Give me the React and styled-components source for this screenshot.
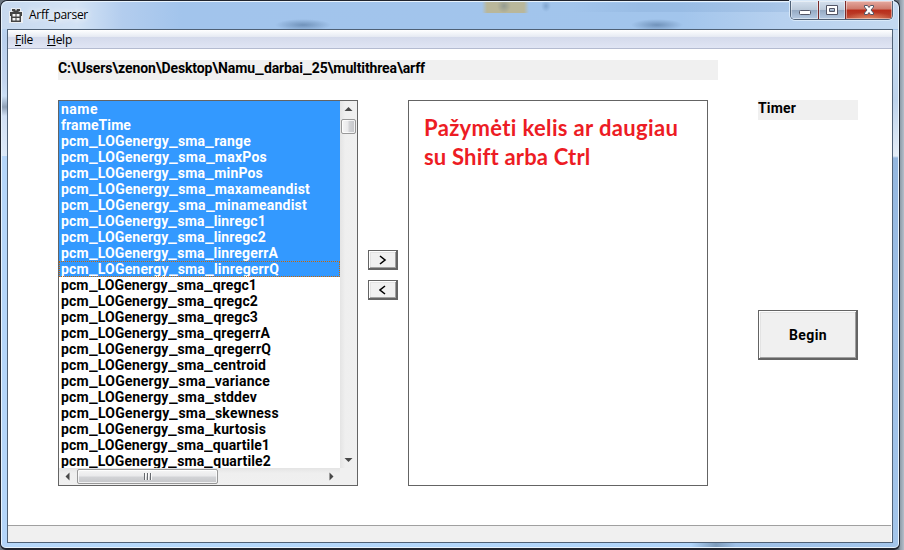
import React from "react";
import styled, { createGlobalStyle, css } from "styled-components";

const Global = createGlobalStyle`
  * { box-sizing: border-box; }
  html, body { margin: 0; padding: 0; overflow: hidden; }
`;

const SYSTEM = 'bold 14px Roboto, "Liberation Sans", sans-serif';
const CAPTION = '12px "Open Sans", "Noto Sans", sans-serif';
const NOTE = 'bold 22px Lato, sans-serif';
const UNDERSCORE = 9;

const ctx = document.createElement("canvas").getContext("2d");
function spacingFor(text, font, width) {
  const wide = font === SYSTEM ? text.split("_").length - 1 : 0;
  const letters = wide ? text.replaceAll("_", "") : text;
  ctx.font = font;
  return (width - wide * UNDERSCORE - ctx.measureText(letters).width) / letters.length;
}

const Line = styled.span`
  display: block;
  white-space: pre;
  font: ${(p) => p.$font};
  letter-spacing: ${(p) => p.$spacing.toFixed(3)}px;
`;

const Underscore = styled.span`
  display: inline-block;
  width: 6.3px;
  margin-right: ${UNDERSCORE - 6.3}px;
  transform: scaleX(1.4);
  transform-origin: 0 0;
  letter-spacing: 0;
`;

function Label({ text, width, font = SYSTEM, children }) {
  const content = font === SYSTEM
    ? text.split(/(_)/).map((s, i) => (s === "_" ? <Underscore key={i}>_</Underscore> : s))
    : text;
  return (
    <Line $font={font} $spacing={spacingFor(text, font, width)}>
      {children || content}
    </Line>
  );
}

const Desktop = styled.div`
  width: 904px;
  height: 550px;
  overflow: hidden;
  background: linear-gradient(90deg, #6b7580 899px, #8e9ba8 900px, #b5bfca 904px);
`;

const Window = styled.div`
  width: 900px;
  height: 550px;
  display: flex;
  flex-direction: column;
  padding: 0 6px 5px 5px;
  border: solid #20242e;
  border-width: 1px 1px 2px 1px;
  border-radius: 7px 7px 6px 6px;
  box-shadow: inset 0 0 0 1px #e8f3fd;
  background:
    linear-gradient(90deg, #b4d5f9 0 8px, transparent 8px) 0 155px / 8px 400px no-repeat,
    linear-gradient(180deg, #c0e0fa 0, #b9d0ed 35px, #c3d5ef 80px, #cbdff5 95px, #8fa0b6 106px, #d1e0f4 115px, #dce9f8 155px) 0 0 / 8px 155px no-repeat,
    linear-gradient(180deg, #c9dcf1 0, #bdd3ec 70px, #e4edf7 126px, #94b7df 128px, #9fc1e8 300px, #a3c5ea 100%) 100% 29px / 8px 521px no-repeat,
    linear-gradient(90deg, #b6d8fa, #b0d5fa 690px, #7e9dbd 715px, #9fc1e8 735px, #a3c6ec) 0 100% / 100% 7px no-repeat,
    #a2c5ec;
`;

const TitleBar = styled.header`
  flex: none;
  height: 28px;
  margin: 0 -5px 0 -4px;
  padding-left: 7px;
  display: flex;
  align-items: flex-start;
  border-radius: 6px 6px 0 0;
  box-shadow: inset 0 1px #e8f3fd;
  background:
    radial-gradient(ellipse 28px 6px at 301px 24px, #6486aecc, transparent),
    radial-gradient(ellipse 26px 6px at 655px 24px, #6486aecc, transparent),
    radial-gradient(ellipse 5px 6px at 544px 5px, #6d93bfa0, transparent),
    radial-gradient(ellipse 7px 7px at 502px 5px, #838e8cb0, transparent),
    linear-gradient(90deg, transparent 480px, #b9b79b 485px 522px, transparent 527px) 0 1px / 100% 11px no-repeat,
    linear-gradient(90deg, transparent 570px, #83a8d450 640px 770px, transparent) 0 2px / 100% 9px no-repeat,
    linear-gradient(90deg, #c7d9ef 0, #d3e3f5 75px, #b3cdee 120px, #a2c4ec 180px, #a2c5ec 680px, #b7d1ef 780px, #c4d9f1 100%);
`;

const AppIcon = styled.svg`
  width: 14px;
  height: 16px;
  margin: 6px 6px 0 0;
`;

const Title = styled.div`
  flex: 1;
  padding-top: 5px;
  text-shadow: 0 0 7px #fff, 0 0 8px #fff;
`;

const Controls = styled.div`
  display: flex;
  height: 19px;
  margin-right: 5px;
  border: 1px solid #4f6176;
  border-top: 0;
  border-radius: 0 0 5px 5px;
  overflow: hidden;
  box-shadow: 0 0 0 1px #d9e9f9;
`;

const tones = {
  min: "linear-gradient(#d5e1ee, #bccada 48%, #94a9c2 50%, #b5cae2)",
  max: "linear-gradient(#d5e1ee, #bccada 48%, #94a9c2 50%, #b5cae2)",
  close: "radial-gradient(ellipse 25px 7px at 50% 100%, #e18a65, transparent), linear-gradient(#e5aaa0, #ce796b 45%, #b82c19 50%, #bd4b36)",
};

const controlWidths = { min: 27, max: 27, close: 47 };

const Control = styled.button`
  width: ${(p) => controlWidths[p.$kind]}px;
  height: 18px;
  padding: 0;
  border: 0;
  box-shadow: inset 0 0 0 1px #ffffff70;
  background: ${(p) => tones[p.$kind]};
  & + & { border-left: 1px solid ${(p) => (p.$kind === "close" ? "#7b2a28" : "#60738b")}; }
  svg { display: block; width: 100%; height: 18px; }
`;

const Client = styled.div`
  flex: 1;
  display: flex;
  flex-direction: column;
  min-height: 0;
  border: 1px solid #4f6176;
  margin-left: 1px;
  background: #fff;
`;

const MenuBar = styled.nav`
  flex: none;
  height: 19px;
  display: flex;
  gap: 14px;
  padding: 1px 7px;
  border-bottom: 1px solid #b4bbd0;
  background: linear-gradient(#fff 0, #f0f3f8 4px, #e5e9f2 7px, #d4daeb 7px, #e0e5f4 100%);
`;

const Body = styled.main`
  flex: 1;
  min-height: 0;
  padding: 11px 33px 0 50px;
`;

const PathBox = styled.div`
  width: 660px;
  height: 20px;
  background: #f0f0f0;
`;

const Work = styled.div`
  display: grid;
  grid-template-columns: 300px 50px 300px 150px;
  justify-content: start;
  margin-top: 20px;
`;

const Panel = styled.div`
  height: 386px;
  border: 1px solid #646464;
  background: #fff;
  ${(p) => p.$list && css`
    display: grid;
    grid-template-columns: 281px 17px;
    grid-template-rows: 367px 17px;
  `}
`;

const Rows = styled.div`
  min-width: 0;
`;

const Row = styled.div`
  width: 281px;
  height: 16px;
  padding-left: 2px;
  color: ${(p) => (p.$selected ? "#fff" : "#000")};
  background: ${(p) => (p.$selected ? "#3399ff" : "#fff")};
  ${(p) => p.$focused && css`
    outline: 1px dotted #cc6600;
    outline-offset: -1px;
  `}
`;

const ScrollBar = styled.div`
  position: relative;
  display: flex;
  flex-direction: ${(p) => (p.$vertical ? "column" : "row")};
  background: linear-gradient(${(p) => (p.$vertical ? "90deg" : "180deg")}, #e4e4e4, #efefef 30%, #f0f0f0);
  & > svg { flex: none; width: 17px; height: 17px; }
`;

const Thumb = styled.div`
  flex: none;
  display: flex;
  align-items: center;
  justify-content: center;
  gap: 2px;
  width: ${(p) => (p.$vertical ? 15 : 141)}px;
  height: 15px;
  margin: ${(p) => (p.$vertical ? "1px 1px auto" : "1px auto 1px 1px")};
  border: 1px solid #989898;
  border-radius: 2px;
  box-shadow: inset 0 0 0 1px #ffffffc0;
  background: linear-gradient(${(p) => (p.$vertical ? "90deg" : "180deg")}, #f5f5f5, #e9e9eb 48%, #d3d4d7 52%, #c5c6c9);
`;

const Grip = styled.i`
  width: 1px;
  height: 7px;
  background: #66696e;
  box-shadow: 1px 0 #fafafa;
`;

const Corner = styled.div`
  background: #f0f0f0;
`;

const Transfer = styled.div`
  display: flex;
  flex-direction: column;
  align-items: center;
  gap: 10px;
  padding-top: 150px;
`;

const Push = styled.button`
  display: flex;
  align-items: center;
  justify-content: center;
  width: ${(p) => (p.$large ? 100 : 30)}px;
  height: ${(p) => (p.$large ? 50 : 20)}px;
  padding: 0 0 0 1px;
  color: #000;
  border: solid #646464;
  border-width: 1px 2px 2px 1px;
  background: #f0f0f0;
  box-shadow: inset 1px 1px #fff, inset -1px -1px #a0a0a0, inset 2px 2px #e3e3e3;
  svg { width: 8px; height: 10px; }
`;

const Note = styled.div`
  padding: 12px 0 0 15px;
  color: #ed1c24;
  span { line-height: 29px; }
`;

const Side = styled.div`
  width: 100px;
  margin-left: 50px;
`;

const TimerBox = styled.div`
  height: 20px;
  margin-bottom: 190px;
  background: #f0f0f0;
`;

const StatusBar = styled.footer`
  flex: none;
  height: 17px;
  margin-right: 1px;
  border-top: 1px solid #a0a0a0;
  background: #f0f0f0;
`;

const P = "pcm_LOGenergy_sma_";
const items = [
  ["name", 37], ["frameTime", 70], [P + "range", 190], [P + "maxPos", 206],
  [P + "minPos", 202], [P + "maxameandist", 249], [P + "minameandist", 246],
  [P + "linregc1", 205], [P + "linregc2", 205], [P + "linregerrA", 217],
  [P + "linregerrQ", 218], [P + "qregc1", 196], [P + "qregc2", 197],
  [P + "qregc3", 197], [P + "qregerrA", 209], [P + "qregerrQ", 210],
  [P + "centroid", 205], [P + "variance", 209], [P + "stddev", 196],
  [P + "skewness", 218], [P + "kurtosis", 205], [P + "quartile1", 209],
  [P + "quartile2", 210],
];

const arrows = {
  up: "M4.5 10 8.5 6 12.5 10Z",
  down: "M4.5 7 8.5 11 12.5 7Z",
  left: "M10.5 4.5 6.5 8.5 10.5 12.5Z",
  right: "M6.5 4.5 10.5 8.5 6.5 12.5Z",
};

const Arrow = ({ dir }) => (
  <svg viewBox="0 0 17 17"><path d={arrows[dir]} fill="#484848" /></svg>
);

export default function App() {
  return (
    <Desktop>
      <Global />
      <Window>
        <TitleBar>
          <AppIcon viewBox="0 0 14 16">
            <path d="M0 4h2V1h4l1 1 1-1h4v3h2v12H0Z" fill="#f3f3f3" opacity=".8" />
            <path d="M1 5h12v4h-1v6H2V9H1ZM3 2h3l1 2 1-2h3v2l-2 1H5L3 4Z" fill="#444" />
            <path d="M3.5 7h3v2.5h-3zm4 0h3v2.5h-3zm-4 4h3v2.5h-3zm4 0h3v2.5h-3z" fill="#f7f7f7" />
          </AppIcon>
          <Title><Label text="Arff_parser" font={CAPTION} width={59} /></Title>
          <Controls>
            <Control $kind="min" aria-label="Minimize">
              <svg viewBox="0 0 27 18"><rect x="8.5" y="9.5" width="11" height="4" rx="1" fill="#fff" stroke="#535666" /></svg>
            </Control>
            <Control $kind="max" aria-label="Maximize">
              <svg viewBox="0 0 26 18">
                <path d="M7.5 4.5h11v9h-11zM10.5 7.5v3h5v-3z" fill="#fff" fillRule="evenodd" stroke="#535666" />
              </svg>
            </Control>
            <Control $kind="close" aria-label="Close">
              <svg viewBox="0 0 46 18">
                <path d="M18.5 4.5h3l1.5 2 1.5-2h3v1.5l-2.5 3 2.5 3v1.5h-3l-1.5-2-1.5 2h-3v-1.5l2.5-3-2.5-3Z" fill="#fff" stroke="#535666" />
              </svg>
            </Control>
          </Controls>
        </TitleBar>
        <Client>
          <MenuBar>
            <Label text="File" font={CAPTION} width={18}><u>F</u>ile</Label>
            <Label text="Help" font={CAPTION} width={25}><u>H</u>elp</Label>
          </MenuBar>
          <Body>
            <PathBox>
              <Label text="C:\Users\zenon\Desktop\Namu_darbai_25\multithrea\arff" width={367} />
            </PathBox>
            <Work>
              <Panel $list>
                <Rows>
                  {items.map(([text, width], i) => (
                    <Row key={text} $selected={i < 11} $focused={i === 10}>
                      <Label text={text} width={width} />
                    </Row>
                  ))}
                </Rows>
                <ScrollBar $vertical>
                  <Arrow dir="up" />
                  <Thumb $vertical />
                  <Arrow dir="down" />
                </ScrollBar>
                <ScrollBar>
                  <Arrow dir="left" />
                  <Thumb><Grip /><Grip /><Grip /></Thumb>
                  <Arrow dir="right" />
                </ScrollBar>
                <Corner />
              </Panel>
              <Transfer>
                <Push aria-label="Add">
                  <svg viewBox="0 0 8 10"><path d="M1 1 6 5 1 9" fill="none" stroke="#000" strokeWidth="1.6" /></svg>
                </Push>
                <Push aria-label="Remove">
                  <svg viewBox="0 0 8 10"><path d="M6 1 1 5 6 9" fill="none" stroke="#000" strokeWidth="1.6" /></svg>
                </Push>
              </Transfer>
              <Panel>
                <Note>
                  <Label text="Pažymėti kelis ar daugiau" font={NOTE} width={255} />
                  <Label text="su Shift arba Ctrl" font={NOTE} width={166} />
                </Note>
              </Panel>
              <Side>
                <TimerBox><Label text="Timer" width={38} /></TimerBox>
                <Push $large><Label text="Begin" width={38} /></Push>
              </Side>
            </Work>
          </Body>
          <StatusBar />
        </Client>
      </Window>
    </Desktop>
  );
}
